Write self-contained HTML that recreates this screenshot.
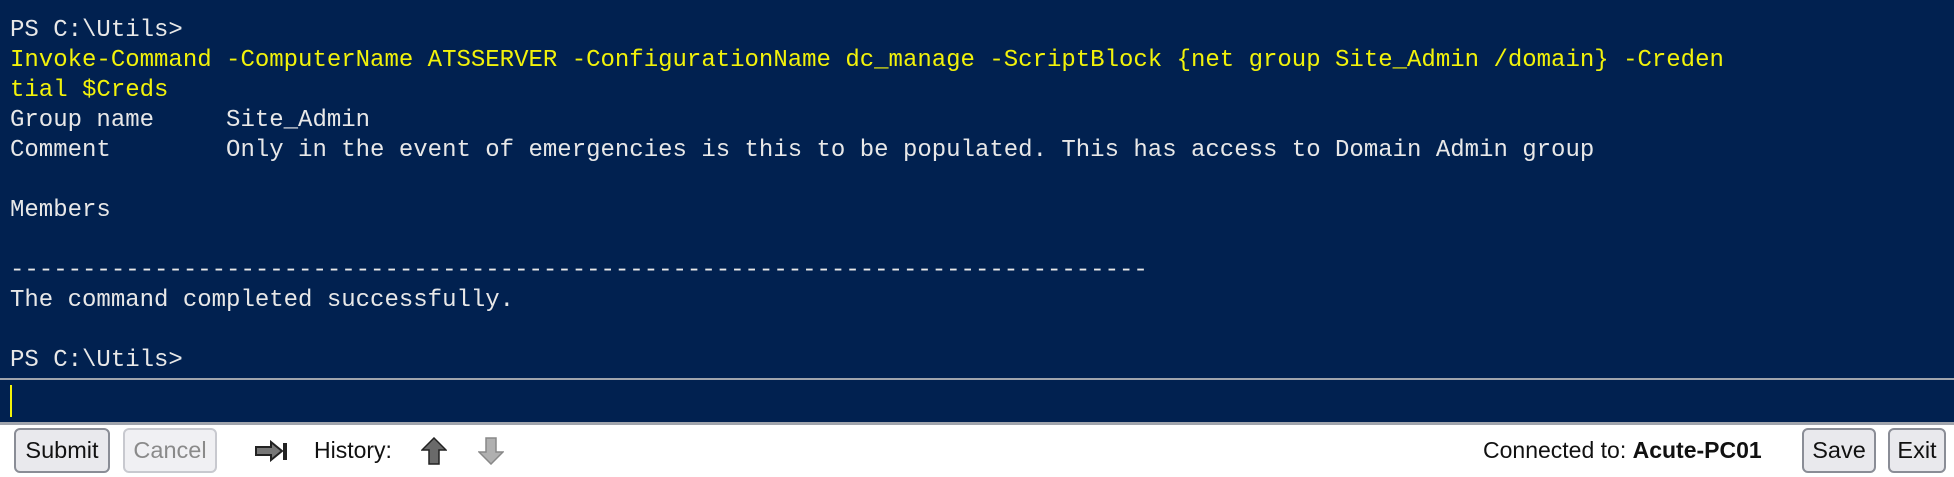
<!DOCTYPE html>
<html><head><style>
html,body{margin:0;padding:0;width:1954px;height:477px;overflow:hidden;background:#fff}
#term{position:absolute;left:0;top:0;width:1954px;height:378px;background:#012150;}
#term pre{margin:0;position:absolute;left:10px;top:16px;font-family:"Liberation Mono",monospace;font-size:24px;line-height:30px;color:#e8e8e8;white-space:pre}
.y{color:#f2f20a}
#sep{position:absolute;left:0;top:378px;width:1954px;height:2px;background:#a0a4ac}
#inp{position:absolute;left:0;top:380px;width:1954px;height:42px;background:#012150}
#cur{position:absolute;left:10px;top:385px;width:2px;height:32px;background:#f2f20a}
#sep2{position:absolute;left:0;top:422px;width:1954px;height:3px;background:#a0a4ac}
.btn{position:absolute;top:428px;height:45px;box-sizing:border-box;border:2px solid #8a8d96;border-radius:6px;background:#e9e9ed;font-family:"Liberation Sans",Arial,sans-serif;font-size:23.5px;color:#111;text-align:center;line-height:41px}
.dis{border-color:#c8c9cf;color:#8a8a8a;background:#f0f0f3}
.t{position:absolute;top:428px;line-height:45px;font-family:"Liberation Sans",Arial,sans-serif;font-size:23px;color:#111}
</style></head><body>
<div id="term"><pre>PS C:\Utils&gt;
<span class="y">Invoke-Command -ComputerName ATSSERVER -ConfigurationName dc_manage -ScriptBlock {net group Site_Admin /domain} -Creden
tial $Creds</span>
Group name     Site_Admin
Comment        Only in the event of emergencies is this to be populated. This has access to Domain Admin group

Members

-------------------------------------------------------------------------------
The command completed successfully.

PS C:\Utils&gt;</pre></div>
<div id="sep"></div>
<div id="inp"></div>
<div id="cur"></div>
<div id="sep2"></div>
<div class="btn" style="left:14px;width:96px">Submit</div>
<div class="btn dis" style="left:123px;width:94px">Cancel</div>
<svg style="position:absolute;left:255px;top:440px" width="34" height="22" viewBox="0 0 34 22">
<path d="M1 7 H16 V2 L27 11 L16 20 V15 H1 Z" fill="#777" stroke="#222" stroke-width="2"/>
<rect x="28" y="3" width="4" height="17" fill="#222"/></svg>
<div class="t" style="left:314px">History:</div>
<svg style="position:absolute;left:421px;top:437px" width="26" height="28" viewBox="0 0 26 28">
<path d="M13 1 L25 13 H18 V27 H8 V13 H1 Z" fill="#6a6a6a" stroke="#222" stroke-width="1.5"/></svg>
<svg style="position:absolute;left:478px;top:437px" width="26" height="28" viewBox="0 0 26 28">
<path d="M8 1 H18 V15 H25 L13 27 L1 15 H8 Z" fill="#b0b0b0" stroke="#888" stroke-width="1.5"/></svg>
<div class="t" style="left:1483px">Connected to: <b>Acute-PC01</b></div>
<div class="btn" style="left:1802px;width:74px">Save</div>
<div class="btn" style="left:1888px;width:58px">Exit</div>
</body></html>
